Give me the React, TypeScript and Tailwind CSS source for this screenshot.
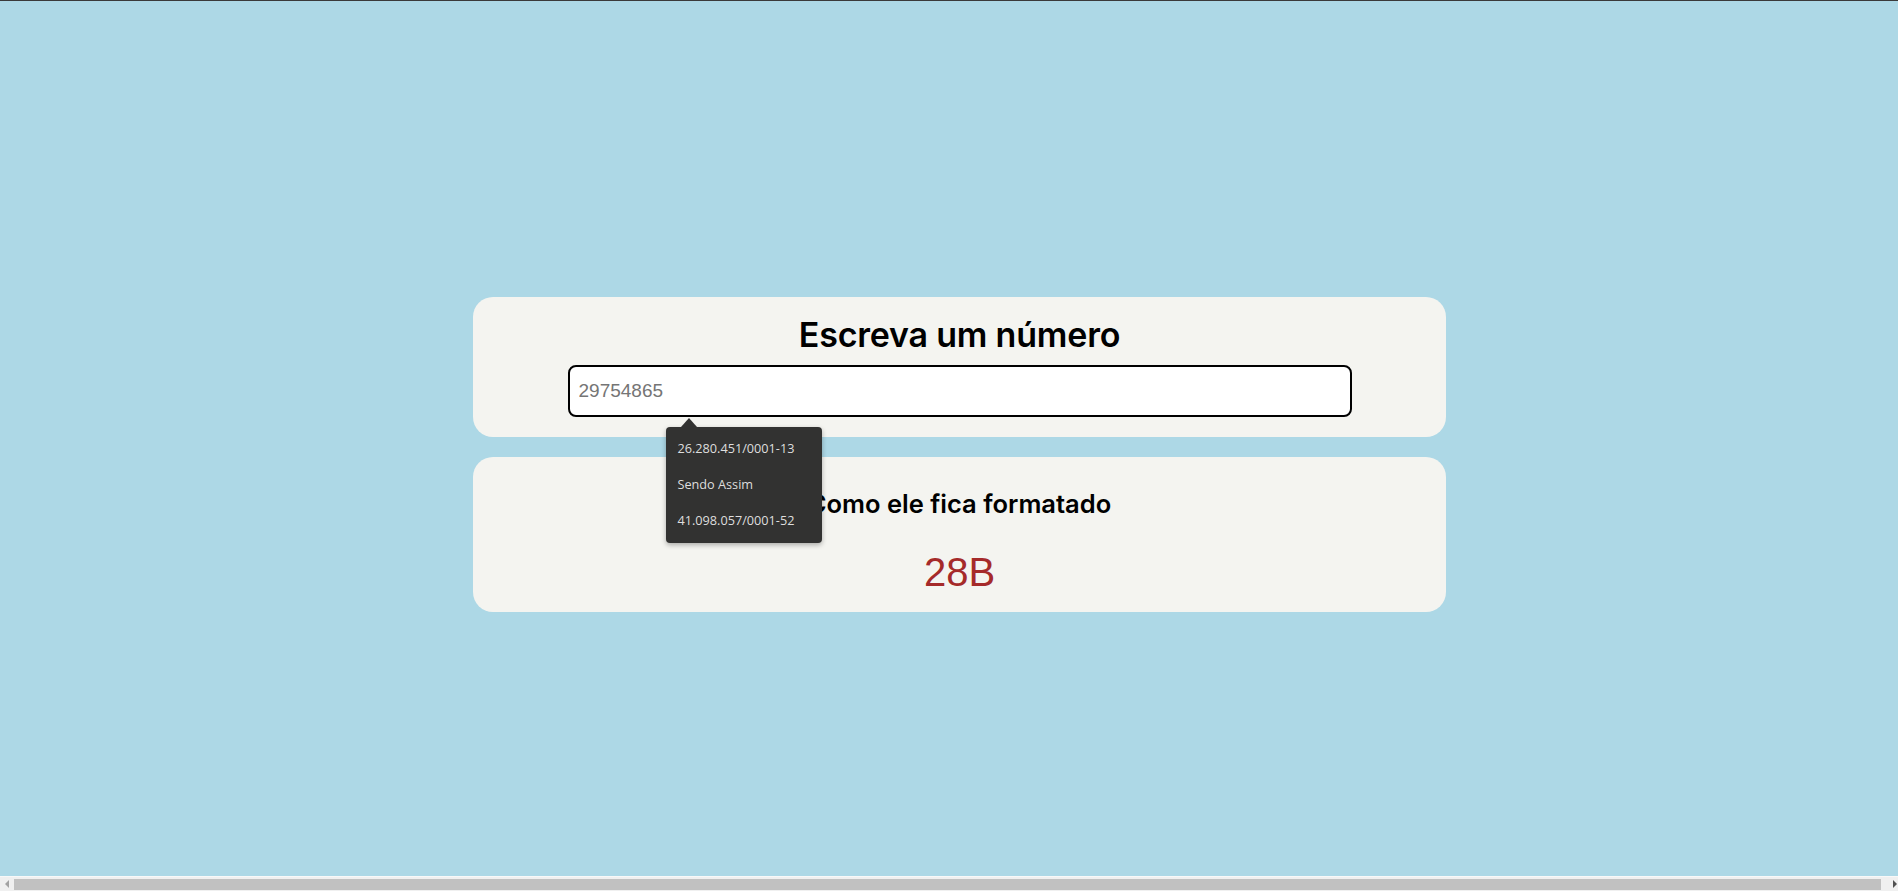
const suggestions = ['26.280.451/0001-13', 'Sendo Assim', '41.098.057/0001-52'];

function Suggestions() {
  return (
    <div className="absolute top-[62px] left-[98px] w-[156px] rounded-[4px] bg-[#323231] pt-[3px] pb-[5px] shadow-[0_2px_5px_rgba(0,0,0,0.3)] z-10">
      {/* arrow */}
      <div className="absolute -top-[9px] left-[15px] w-0 h-0 border-l-[8px] border-r-[8px] border-b-[9px] border-l-transparent border-r-transparent border-b-[#323231]" />
      {suggestions.map((s) => (
        <div
          key={s}
          className="h-[36px] flex items-center px-[12px] text-[12.7px] leading-[18px] text-[#dedede] font-['Open_Sans',sans-serif]"
        >
          {s}
        </div>
      ))}
    </div>
  );
}

function FakeScrollbar() {
  return (
    <div className="h-[15px] bg-[#f0f0f0] border-t border-[#f8f8f8] flex items-center">
      <div className="w-[14px] flex justify-center">
        <div className="w-0 h-0 border-t-[4px] border-b-[4px] border-r-[4px] border-t-transparent border-b-transparent border-r-[#a3a3a3]" />
      </div>
      <div className="flex-1 h-[11px] bg-[#c1c1c1]" />
      <div className="w-[17px] flex justify-end pr-[1px]">
        <div className="w-0 h-0 border-t-[4px] border-b-[4px] border-l-[4px] border-t-transparent border-b-transparent border-l-[#505050]" />
      </div>
    </div>
  );
}

export default function App() {
  return (
    <div className="h-screen flex flex-col border-t border-[#3a3a3a] overflow-hidden">
      <main className="flex-1 bg-[#add8e6] flex flex-col items-center pt-[296px] pl-[21px]">
        {/* Input card */}
        <section className="w-[973px] rounded-[20px] bg-[#f4f4f0] flex flex-col items-center pt-[18px] pb-[20px]">
          <h2 className="text-[34px] leading-[40px] font-semibold text-black font-['Inter',sans-serif] tracking-[-0.2px] mb-[10px]">
            Escreva um número
          </h2>
          <div className="relative">
            <input
              autoFocus
              type="text"
              placeholder="29754865"
              className="w-[784px] h-[52px] border-2 border-black rounded-[8px] bg-white px-[9px] text-[19px] font-['Liberation_Sans',Arial,sans-serif] text-black placeholder:text-[#757575] focus:outline-none"
            />
            <Suggestions />
          </div>
        </section>

        {/* Result card */}
        <section className="mt-[20px] w-[973px] rounded-[20px] bg-[#f4f4f0] flex flex-col items-center pt-[31px] pb-[17px]">
          <h3 className="text-[25.5px] leading-[31px] font-semibold text-black font-['Inter',sans-serif] mb-[30px]">
            Como ele fica formatado
          </h3>
          <p className="text-[40px] leading-[46px] text-[#a52a2a] font-['Liberation_Sans',Arial,sans-serif]">28B</p>
        </section>
      </main>
      <FakeScrollbar />
    </div>
  );
}
